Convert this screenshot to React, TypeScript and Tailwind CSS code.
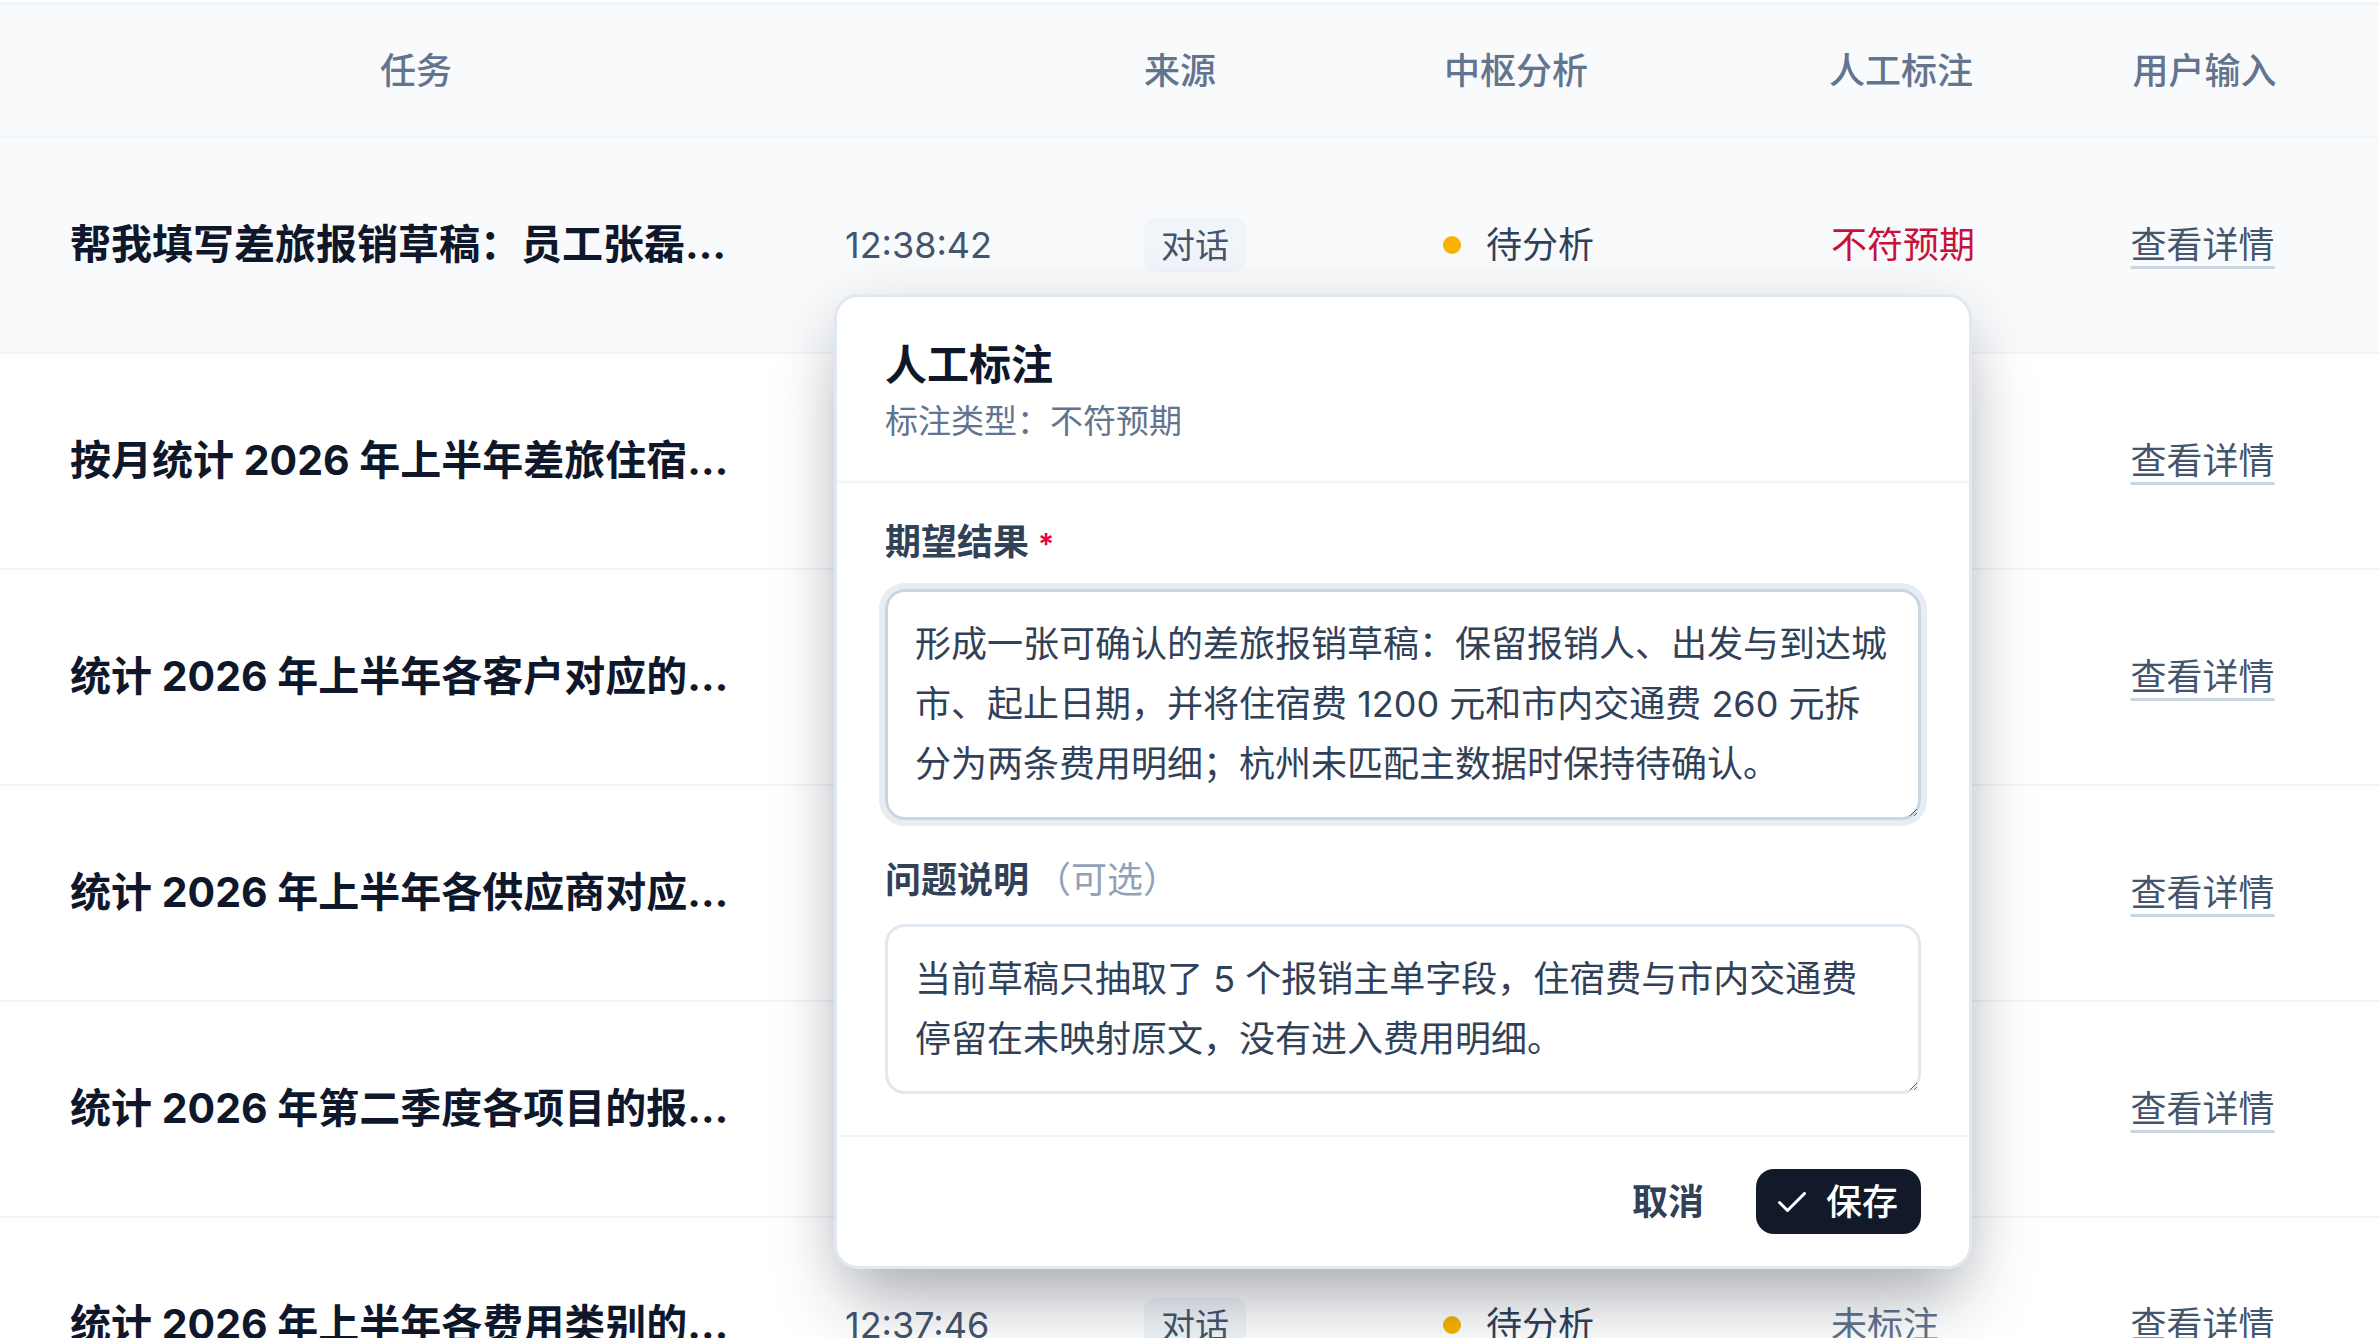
import { useState } from 'react'

type TaskRow = {
  title: string
  time: string
  source: string
  analysis: string
  label: string
  mismatch?: boolean
}

const rows: TaskRow[] = [
  {
    title: '帮我填写差旅报销草稿：员工张磊，3 月 12 日从上海出差至杭州',
    time: '12:38:42',
    source: '对话',
    analysis: '待分析',
    label: '不符预期',
    mismatch: true,
  },
  {
    title: '按月统计 2026 年上半年差旅住宿费用支出情况',
    time: '12:38:31',
    source: '对话',
    analysis: '待分析',
    label: '未标注',
  },
  {
    title: '统计 2026 年上半年各客户对应的应收账款余额',
    time: '12:38:19',
    source: '对话',
    analysis: '待分析',
    label: '未标注',
  },
  {
    title: '统计 2026 年上半年各供应商对应的采购付款金额',
    time: '12:38:05',
    source: '对话',
    analysis: '待分析',
    label: '未标注',
  },
  {
    title: '统计 2026 年第二季度各项目的报销费用汇总',
    time: '12:37:58',
    source: '对话',
    analysis: '待分析',
    label: '未标注',
  },
  {
    title: '统计 2026 年上半年各费用类别的报销金额占比',
    time: '12:37:46',
    source: '对话',
    analysis: '待分析',
    label: '未标注',
  },
]

const cols = 'grid grid-cols-[832px_268px_160px_512px_258px_1fr] items-center'

function CheckIcon() {
  return (
    <svg width="28" height="20" viewBox="0 0 28 20" fill="none" aria-hidden>
      <path d="M1.5 10.5 9.5 18.5 26.5 1.5" stroke="currentColor" strokeWidth="3" strokeLinecap="round" strokeLinejoin="round" />
    </svg>
  )
}

// 人工标注弹层
function AnnotationPopover() {
  const [expected, setExpected] = useState(
    '形成一张可确认的差旅报销草稿：保留报销人、出发与到达城市、起止日期，并将住宿费 1200 元和市内交通费 260 元拆分为两条费用明细；杭州未匹配主数据时保持待确认。'
  )
  const [issue, setIssue] = useState(
    '当前草稿只抽取了 5 个报销主单字段，住宿费与市内交通费停留在未映射原文，没有进入费用明细。'
  )

  return (
    <div className="absolute left-[834px] top-[294px] w-[1138px] rounded-[24px] border-[3px] border-slate-200 bg-white shadow-[0_40px_70px_-12px_rgba(15,23,42,0.34),0_0_60px_rgba(15,23,42,0.06)]">
      <div className="border-b-2 border-slate-100 px-[48px] pt-[43px] pb-[35px]">
        <h2 className="text-[42px] leading-[50px] font-bold text-slate-900">人工标注</h2>
        <p className="mt-[6px] text-[33px] leading-[50px] text-slate-500">标注类型：不符预期</p>
      </div>

      <div className="px-[48px] pt-[34px] pb-[41px]">
        <label className="block text-[36px] leading-[50px] font-semibold text-slate-700">
          期望结果 <span className="text-[30px] text-rose-600">*</span>
        </label>
        <textarea
          value={expected}
          onChange={(e) => setExpected(e.target.value)}
          className="mt-[20px] block h-[231px] w-full rounded-[20px] border-[3px] border-slate-300 px-[27px] py-[22px] text-[36px] leading-[60px] text-slate-700 outline-none ring-[6px] ring-[#e8edf4]"
        />

        <label className="mt-[35px] block text-[36px] leading-[50px] font-semibold text-slate-700">
          问题说明<span className="ml-[6px] font-normal text-slate-400">（可选）</span>
        </label>
        <textarea
          value={issue}
          onChange={(e) => setIssue(e.target.value)}
          className="mt-[19px] block h-[170px] w-full rounded-[20px] border-[3px] border-slate-200 px-[27px] py-[22px] text-[36px] leading-[60px] text-slate-700 outline-none"
        />
      </div>

      <div className="flex items-center justify-end gap-[52px] border-t-2 border-slate-100 px-[48px] py-[32px]">
        <button className="text-[36px] leading-[50px] font-semibold text-slate-700">取消</button>
        <button className="flex h-[65px] items-center gap-[20px] rounded-[18px] bg-[#121a2a] pl-[22px] pr-[23px] text-[36px] font-medium text-white">
          <CheckIcon />
          保存
        </button>
      </div>
    </div>
  )
}

export default function App() {
  return (
    <div className="relative h-screen w-full overflow-hidden bg-white pt-[2px] font-['Inter','Noto_Sans_CJK_SC',sans-serif]">
      <div className="border-t-[3px] border-slate-100">
        {/* 表头 */}
        <div className={`${cols} h-[133px] border-b-2 border-slate-100 bg-slate-50 text-[36px] font-medium text-slate-500`}>
          <div className="text-center">任务</div>
          <div />
          <div className="text-center">来源</div>
          <div className="text-center">中枢分析</div>
          <div className="text-center">人工标注</div>
          <div className="text-center">用户输入</div>
        </div>

        {rows.map((row, i) => (
          <div
            key={i}
            className={`${cols} h-[216px] border-b-2 border-slate-100 ${i === 0 ? 'bg-slate-50' : 'bg-white'}`}
          >
            <div className="truncate pl-[70px] pr-[96px] text-[41px] font-bold text-slate-900">{row.title}</div>
            <div className="pl-[13px] text-[36px] text-slate-600">{row.time}</div>
            <div className="pl-[44px]">
              <span className="inline-flex h-[54px] items-center rounded-[12px] bg-slate-100 px-[17px] text-[34px] text-slate-600">
                {row.source}
              </span>
            </div>
            <div className="flex items-center gap-[25px] pl-[183px] text-[36px] text-slate-700">
              <span className="h-[18px] w-[18px] rounded-full bg-[#f6b400]" />
              {row.analysis}
            </div>
            <div className={`pl-[59px] text-[36px] ${row.mismatch ? 'text-[#c8103a]' : 'text-slate-500'}`}>
              {row.label}
            </div>
            <div className="pr-[4px] text-center">
              <a className="text-[36px] text-slate-600 underline decoration-slate-300 decoration-[3px] underline-offset-[8px]">
                查看详情
              </a>
            </div>
          </div>
        ))}
      </div>

      <AnnotationPopover />
    </div>
  )
}
